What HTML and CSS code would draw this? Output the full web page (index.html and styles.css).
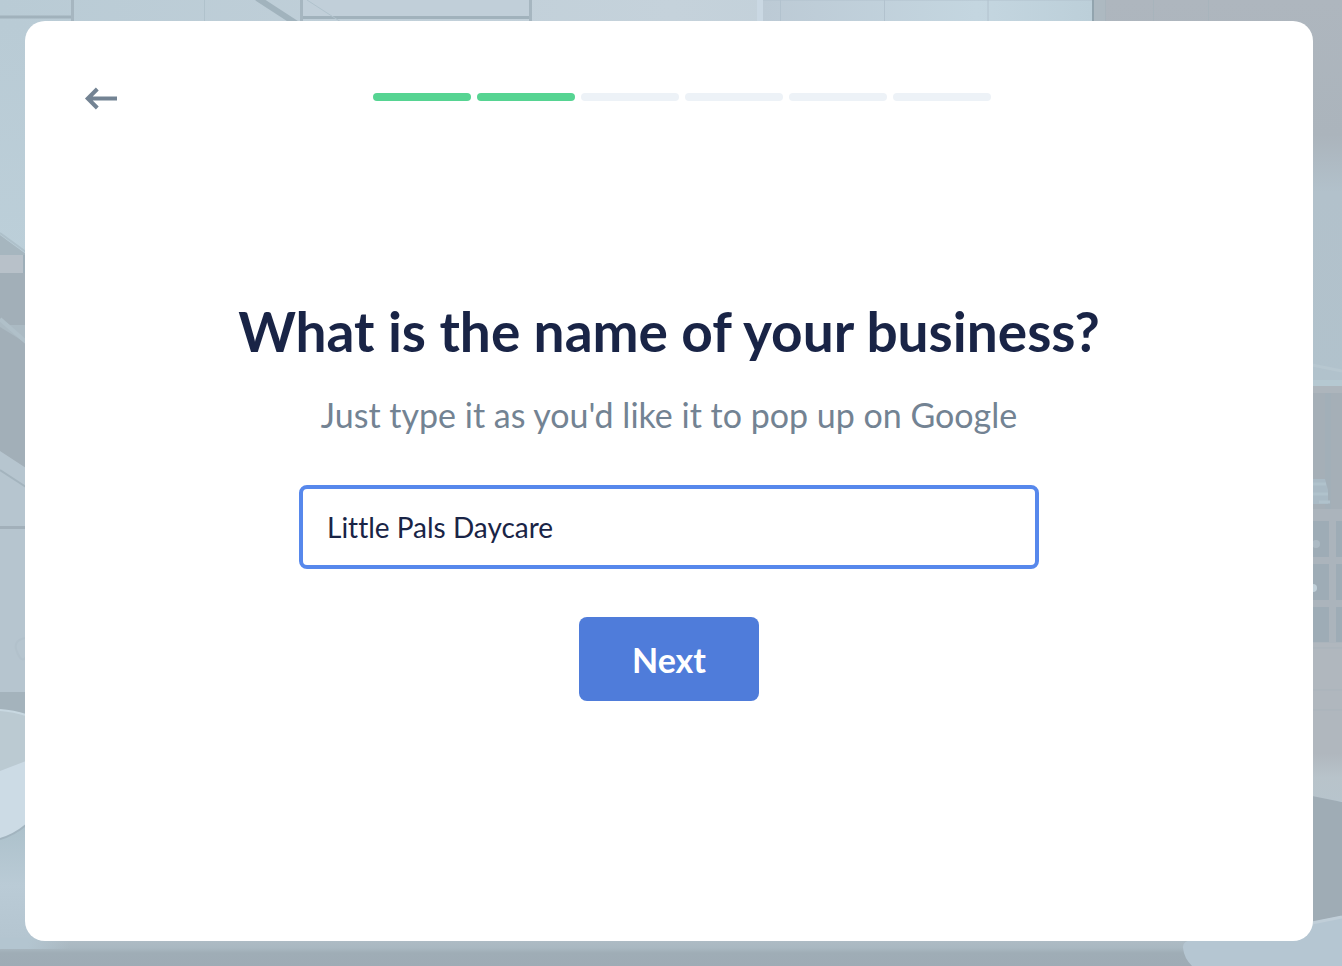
FILE: index.html
```html
<!DOCTYPE html>
<html lang="en">
<head>
    <meta charset="UTF-8">
    <meta name="viewport" content="width=device-width, initial-scale=1.0">
    <title>What is the name of your business?</title>
    <link rel="stylesheet" href="styles.css">
</head>
<body>
    <!-- Faded room behind the card -->
    <svg class="backdrop" viewBox="0 0 1342 966" preserveAspectRatio="none" aria-hidden="true">
        <defs>
            <linearGradient id="wall" x1="0" y1="0" x2="1" y2="0">
                <stop offset="0" stop-color="#b9cbd5"/>
                <stop offset="0.5" stop-color="#c5d2db"/>
                <stop offset="1" stop-color="#b9cbd5"/>
            </linearGradient>
            <linearGradient id="window" x1="0" y1="0" x2="1" y2="0">
                <stop offset="0" stop-color="#bccad5"/>
                <stop offset="0.65" stop-color="#c4d6e0"/>
                <stop offset="1" stop-color="#bccfd9"/>
            </linearGradient>
            <linearGradient id="cabinet" x1="0" y1="0" x2="0" y2="1">
                <stop offset="0" stop-color="#aeb6be"/>
                <stop offset="0.35" stop-color="#abb4bc"/>
                <stop offset="0.5" stop-color="#b2c1cb"/>
                <stop offset="1" stop-color="#b1c2cc"/>
            </linearGradient>
            <linearGradient id="leftWall" x1="0" y1="0" x2="0" y2="1">
                <stop offset="0" stop-color="#b9cbd5"/>
                <stop offset="1" stop-color="#bccfd9"/>
            </linearGradient>
            <linearGradient id="bench" x1="0" y1="0" x2="0" y2="1">
                <stop offset="0" stop-color="#b0b7be"/>
                <stop offset="0.7" stop-color="#b0b7be"/>
                <stop offset="0.85" stop-color="#b8c3ca"/>
                <stop offset="1" stop-color="#b7c4cc"/>
            </linearGradient>
            <linearGradient id="floor" x1="0" y1="0" x2="0" y2="1">
                <stop offset="0" stop-color="#abc0ca"/>
                <stop offset="0.45" stop-color="#bacbd6"/>
                <stop offset="1" stop-color="#b1c2cd"/>
            </linearGradient>
            <linearGradient id="edge" x1="0" y1="0" x2="0" y2="1">
                <stop offset="0" stop-color="#aebcc5"/>
                <stop offset="0.3" stop-color="#a9b8c1"/>
                <stop offset="0.5" stop-color="#9fadb6"/>
                <stop offset="1" stop-color="#9eabb5"/>
            </linearGradient>
            <linearGradient id="glow" x1="0" y1="0" x2="1" y2="0">
                <stop offset="0" stop-color="#b3c5d0"/>
                <stop offset="0.4" stop-color="#b3c5d0"/>
                <stop offset="1" stop-color="#b3c5d0" stop-opacity="0"/>
            </linearGradient>
        </defs>

        <rect width="1342" height="966" fill="url(#wall)"/>

        <!-- Ceiling panels -->
        <rect x="303" y="0" width="226" height="16" fill="#c1cfd9"/>
        <path d="M0 17H72M302 17.500H530" stroke="#a1b2bc" stroke-width="3"/>
        <path d="M72.500 0V22M301.500 0V22M530.500 0V22" stroke="#a6b6c0" stroke-width="3"/>
        <path d="M257 -2L297 24" stroke="#a1b3bd" stroke-width="6"/>
        <path d="M204.500 0V22M307 0L341 22" stroke="#b0c2cc" stroke-width="1"/>

        <!-- Window -->
        <rect x="763" y="0" width="329" height="22" fill="url(#window)"/>
        <rect x="757" y="0" width="6" height="22" fill="#cad8e3"/>
        <path d="M780.500 0V22M884.500 0V22M988 0V22M763 0H1092" stroke="#b2c2ce"/>

        <!-- Right cabinet -->
        <rect x="1092" y="0" width="250" height="385" fill="url(#cabinet)"/>
        <rect x="1092" y="0" width="2" height="22" fill="#92a4ae"/>
        <rect x="1094" y="0" width="11" height="22" fill="#adb9c1"/>
        <path d="M1105.500 0V22M1153.500 0V22M1208.500 0V22" stroke="#a8b4bc"/>
        <path d="M1312 365L1342 371" stroke="#b7c7d0" stroke-width="3"/>
        <rect x="1312" y="380" width="30" height="6" fill="#b5c8d1"/>
        <rect x="1312" y="386" width="30" height="7" fill="#adb5bc"/>
        <rect x="1312" y="393" width="30" height="117" fill="#a5afb7"/>
        <rect x="1325" y="393" width="6" height="117" fill="#a2afb8"/>
        <path d="M1312 479H1325L1328 490V504H1312Z" fill="#a9bac5"/>
        <path d="M1312 484H1326M1312 494H1328M1319 502H1330" stroke="#b0c2cc" stroke-width="3"/>
        <rect x="1312" y="509" width="30" height="149" fill="#abb4bc"/>
        <path d="M1312 521H1329V557H1312ZM1336 521H1342V557H1336ZM1312 564H1329V600H1312ZM1336 564H1342V600H1336ZM1312 607H1329V642H1312ZM1336 607H1342V642H1336Z" fill="#9eacb6"/>
        <circle cx="1316" cy="544" r="4" fill="#acbac4"/>
        <circle cx="1313" cy="588" r="4" fill="#c1d0d9"/>
        <rect x="1312" y="643" width="30" height="158" fill="url(#bench)"/>
        <path d="M1312 648H1342M1312 690H1342M1312 710H1342" stroke="#a9b3bb"/>
        <path d="M1312 796L1342 802V920L1312 926Z" fill="#9facb5"/>

        <!-- Left side shelf and stair -->
        <rect x="0" y="22" width="26" height="250" fill="url(#leftWall)"/>
        <path d="M0 235L26 254V256H0Z" fill="#a6b6bf"/>
        <path d="M0 233L26 252" stroke="#aec0ca" stroke-width="2"/>
        <rect x="0" y="273" width="26" height="200" fill="#a2afb8"/>
        <rect x="0" y="255" width="23" height="18" fill="#b8c1c9"/>
        <rect x="23" y="255" width="3" height="18" fill="#9eafb9"/>
        <path d="M0 319L10 325L26 325V343L0 327Z" fill="#abbac3"/>
        <path d="M0 319L26 342" stroke="#b0c0c9" stroke-width="4"/>
        <path d="M0 451L26 468V694H0Z" fill="#b6c5cf"/>
        <path d="M0 470L26 487" stroke="#a4b4be" stroke-width="2"/>
        <rect x="0" y="526" width="26" height="3" fill="#a2b0ba"/>
        <path d="M26 638Q12 640 17 652T26 657" fill="none" stroke="#b2c1cb" stroke-width="2"/>

        <!-- Chair on the left -->
        <rect x="0" y="692" width="26" height="26" fill="#a4b3bc"/>
        <rect x="0" y="820" width="150" height="146" fill="url(#floor)"/>
        <path d="M0 710Q14 711 26 715V763L0 773Z" fill="#bbcad2"/>
        <path d="M0 710Q14 711 26 715" fill="none" stroke="#c8d8e1" stroke-width="2"/>
        <path d="M0 771L26 761V825Q14 835 0 839Z" fill="#ccdbe5"/>
        <path d="M0 839Q14 835 26 825" fill="none" stroke="#a2b4bf" stroke-width="2"/>

        <!-- Table edge and cushion -->
        <rect x="0" y="940" width="1342" height="26" fill="url(#edge)"/>
        <rect x="0" y="938" width="70" height="11" fill="url(#glow)"/>
        <path d="M1183 948Q1182 941 1192 940L1312 922L1342 916V966H1192Q1184 958 1183 948Z" fill="#b5c6d2"/>
        <path d="M1312 923L1342 917" stroke="#c0ced8" stroke-width="3"/>
    </svg>

    <main class="card">
        <header class="card-header">
            <button class="back-button" type="button" aria-label="Back">
                <svg class="back-icon" viewBox="0 0 32 24" aria-hidden="true">
                    <path d="M2.500 13.500H32M12.300 4L2.800 13.500L12.300 23" fill="none" stroke="#738393" stroke-width="4"/>
                </svg>
            </button>
            <div class="progress" role="progressbar" aria-label="Progress" aria-valuemin="0" aria-valuemax="6" aria-valuenow="2">
                <span class="step done"></span>
                <span class="step done"></span>
                <span class="step"></span>
                <span class="step"></span>
                <span class="step"></span>
                <span class="step"></span>
            </div>
        </header>

        <form class="question">
            <h1 class="title"><label for="businessName">What is the name of your business?</label></h1>
            <p class="hint" id="nameHint">Just type it as you'd like it to pop up on Google</p>
            <input class="name-input" type="text" id="businessName" value="Little Pals Daycare" aria-describedby="nameHint" autocomplete="off">
            <button class="next-button" type="submit">Next</button>
        </form>
    </main>
</body>
</html>
```
FILE: styles.css
```css
* {
    box-sizing: border-box;
}

body {
    display: flex;
    min-height: 100vh;
    margin: 0;
    padding: 21px 29px 25px 25px;
    font-family: Lato, sans-serif;
    font-variant-ligatures: none;
    background-color: #b9cbd5;
}

.backdrop {
    position: fixed;
    top: 0;
    left: 0;
    width: 100%;
    height: 100%;
    z-index: -1;
}

.card {
    flex: 1;
    min-width: 0;
    padding-bottom: 60px;
    background-color: white;
    border-radius: 20px;
}

.card-header {
    display: flex;
    align-items: center;
    padding: 64px 66px 0 60px;
}

.back-button {
    display: flex;
    padding: 0;
    border: none;
    background: none;
    cursor: pointer;
}

.back-icon {
    width: 32px;
    height: 24px;
    overflow: visible;
}

.progress {
    display: flex;
    flex: 1;
    gap: 6px;
    max-width: 618px;
    margin: 0 auto;
}

.step {
    flex: 1;
    height: 8px;
    border-radius: 4px;
    background-color: #edf2f7;
}

.step.done {
    background-color: #56d492;
}

.question {
    display: flex;
    flex-direction: column;
    align-items: center;
    max-width: 1000px;
    margin: 0 auto;
    padding: 192px 24px 0;
    text-align: center;
}

.title {
    margin: 0;
    font-size: 55px;
    font-weight: 700;
    line-height: 60px;
    color: #192446;
}

.hint {
    margin: 30px 0 0;
    font-size: 34px;
    line-height: 48px;
    color: #738393;
}

.name-input {
    width: 100%;
    max-width: 740px;
    height: 84px;
    margin-top: 46px;
    padding: 0 24px;
    border: 4px solid #5788ec;
    border-radius: 8px;
    outline: none;
    background-color: white;
    font-family: inherit;
    font-size: 28px;
    font-variant-ligatures: none;
    color: #192446;
}

.next-button {
    width: 180px;
    height: 84px;
    margin-top: 48px;
    border: none;
    border-radius: 8px;
    background-color: #4f7cda;
    font-family: inherit;
    font-size: 34px;
    font-weight: 700;
    color: white;
    cursor: pointer;
}

.next-button:hover {
    background-color: #416dca;
}
```
